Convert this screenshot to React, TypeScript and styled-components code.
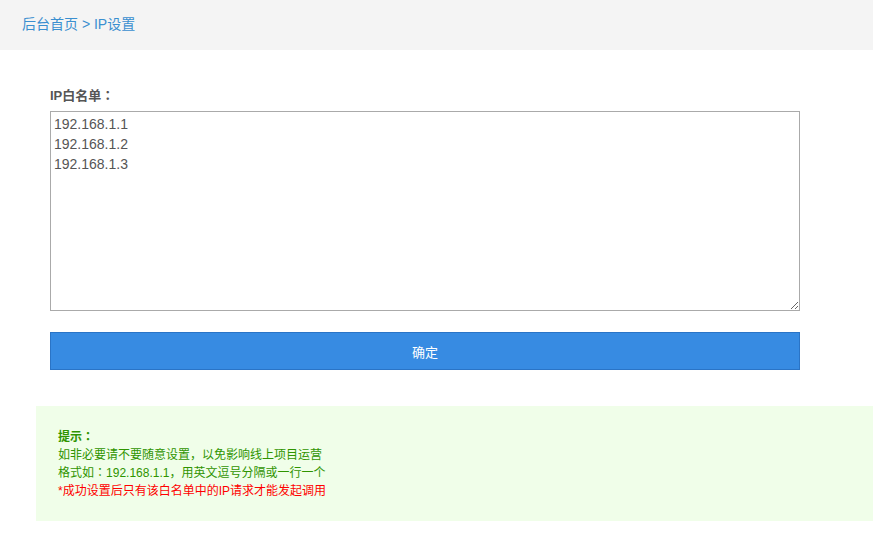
import { createGlobalStyle } from "styled-components";
import styled from "styled-components";

const GlobalStyle = createGlobalStyle`
  body {
    margin: 0;
    background: #fff;
    font-family: "Liberation Sans", Arial, "Noto Sans CJK SC", sans-serif;
    overflow: hidden;
  }
`;

export default function App() {
  return (
    <>
      <GlobalStyle />
      <Page>
        <Crumbs>
          <a href="#">后台首页</a> &gt; IP设置
        </Crumbs>
        <Form>
          <Label>IP白名单<Colon>：</Colon></Label>
          <IpArea defaultValue={"192.168.1.1\n192.168.1.2\n192.168.1.3"} />
          <Submit type="button">确定</Submit>
        </Form>
        <Tips>
          <TipLine $bold>提示<Colon>：</Colon></TipLine>
          <TipLine>如非必要请不要随意设置，以免影响线上项目运营</TipLine>
          <TipLine>格式如<Colon>：</Colon>192.168.1.1，用英文逗号分隔或一行一个</TipLine>
          <TipLine $warn>*成功设置后只有该白名单中的IP请求才能发起调用</TipLine>
        </Tips>
      </Page>
    </>
  );
}

const Page = styled.div`
  width: 100%;
  min-height: 552px;
`;

const Crumbs = styled.div`
  height: 50px;
  line-height: 48px;
  padding-left: 22px;
  background-color: #f4f4f4;
  font-size: 14px;
  color: #3a8fd0;
  a {
    color: #3a8fd0;
    text-decoration: none;
  }
`;

const Form = styled.div`
  width: 750px;
  margin-left: 50px;
  padding-top: 36px;
`;

const Label = styled.div`
  height: 20px;
  font-size: 13px;
  font-weight: bold;
  line-height: 20px;
  color: #555;
  margin-bottom: 5px;
`;

// full-width colon sits centred in its cell, as in the original
const Colon = styled.span`
  font-family: "Noto Sans CJK TC", sans-serif;
  line-height: 1;
`;

const IpArea = styled.textarea`
  display: block;
  box-sizing: border-box;
  width: 750px;
  height: 200px;
  margin: 0;
  padding: 2px 3px;
  border: 1px solid #aaa;
  font-family: "Liberation Sans", Arial, sans-serif;
  font-size: 14px;
  line-height: 20px;
  color: #555;
  resize: both;
  :focus {
    outline: none;
  }
`;

const Submit = styled.button`
  display: block;
  box-sizing: border-box;
  width: 750px;
  height: 38px;
  margin-top: 21px;
  background-color: #378be2;
  border: 1px solid #2a74c6;
  color: #fff;
  font-size: 13px;
  font-family: "Liberation Sans", Arial, "Noto Sans CJK SC", sans-serif;
  cursor: pointer;
`;

const Tips = styled.div`
  margin-top: 36px;
  margin-left: 36px;
  padding: 22px 22px 21px;
  background-color: #f0fee9;
`;

const TipLine = styled.div<{ $bold?: boolean; $warn?: boolean }>`
  height: 18px;
  font-size: 12px;
  line-height: 18px;
  font-weight: ${(p) => (p.$bold ? "bold" : "normal")};
  color: ${(p) => (p.$warn ? "#ff0000" : "#2f9400")};
`;
